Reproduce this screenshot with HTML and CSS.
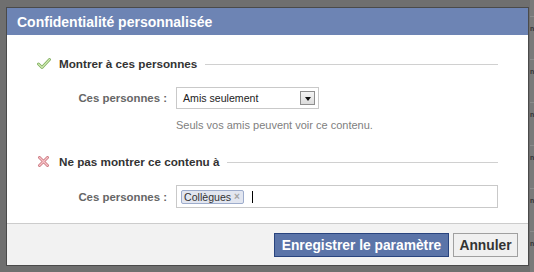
FILE: index.html
```html
<!DOCTYPE html>
<html lang="fr">
<head>
<meta charset="utf-8">
<title>Confidentialité personnalisée</title>
<link rel="stylesheet" href="styles.css">
</head>
<body>
<div class="screen">
  <div class="dialog">
    <div class="dlg-header">Confidentialité personnalisée</div>
    <div class="dlg-body">
      <div class="section-head">
        <svg class="icon" width="14" height="11" viewBox="0 0 14 11">
          <path d="M1.5 6 L5 9.5 L12.5 1.5" fill="none" stroke="#7fae5c" stroke-width="2.8" stroke-linecap="round" stroke-linejoin="round"/>
          <path d="M1.5 6 L5 9.5 L12.5 1.5" fill="none" stroke="#d3ecb6" stroke-width="1.1" stroke-linecap="round" stroke-linejoin="round"/>
        </svg>
        <span class="section-title">Montrer à ces personnes</span>
        <span class="rule"></span>
      </div>
      <div class="row row-first">
        <span class="label">Ces personnes :</span>
        <div class="select">
          <span class="select-text">Amis seulement</span>
          <span class="select-btn"><span class="tri"></span></span>
        </div>
      </div>
      <div class="help">Seuls vos amis peuvent voir ce contenu.</div>
      <div class="section-head section-second">
        <svg class="icon" width="14" height="11" viewBox="0 0 14 11">
          <path d="M2.5 1.5 L10.5 9.5 M10.5 1.5 L2.5 9.5" fill="none" stroke="#cf7f87" stroke-width="3" stroke-linecap="round"/>
          <path d="M2.5 1.5 L10.5 9.5 M10.5 1.5 L2.5 9.5" fill="none" stroke="#f6c4c8" stroke-width="1.1" stroke-linecap="round"/>
        </svg>
        <span class="section-title">Ne pas montrer ce contenu à</span>
        <span class="rule"></span>
      </div>
      <div class="row row-second">
        <span class="label">Ces personnes :</span>
        <div class="tokens">
          <span class="token">Collègues <span class="token-x">×</span></span>
          <span class="caret"></span>
        </div>
      </div>
    </div>
    <div class="dlg-footer">
      <button class="btn btn-primary" type="button">Enregistrer le paramètre</button>
      <button class="btn btn-cancel" type="button">Annuler</button>
    </div>
  </div>
  <div class="strip">
    <div class="strip-row">n</div>
    <div class="strip-row">n</div>
    <div class="strip-row">n</div>
    <div class="strip-row">n</div>
    <div class="strip-row">n</div>
    <div class="strip-row">n</div>
  </div>
</div>
</body>
</html>
```

FILE: styles.css
```css
* { box-sizing: border-box; }
html, body { margin: 0; padding: 0; }
body {
  width: 534px;
  height: 272px;
  overflow: hidden;
  background: #6f6f6f;
  font-family: "Liberation Sans", Arial, sans-serif;
}
.screen {
  display: flex;
  align-items: flex-start;
  height: 272px;
  padding-left: 6px;
  background: #6f6f6f;
}
.dialog {
  width: 523px;
  margin-top: 7px;
  border: 1px solid #4a4a4a;
  background: #fff;
  display: flex;
  flex-direction: column;
}
.dlg-header {
  height: 27px;
  background: #6d84b4;
  color: #fff;
  font-weight: bold;
  font-size: 14px;
  display: flex;
  align-items: center;
  padding-left: 10px;
}
.dlg-body {
  height: 188px;
  padding: 20px 30px 0 30px;
  background: #fff;
}
.section-head {
  height: 16px;
  display: flex;
  align-items: center;
}
.section-second { margin-top: 21px; }
.icon { flex: none; margin-right: 8px; }
.section-title {
  font-weight: bold;
  font-size: 11.7px;
  color: #333;
  white-space: nowrap;
}
.rule {
  flex: 1;
  height: 1px;
  background: #d0d0d0;
  margin-left: 8px;
  margin-top: 2px;
}
.row {
  display: flex;
  align-items: center;
}
.row-first { margin-top: 16px; height: 22px; }
.row-second { margin-top: 16px; height: 23px; }
.label {
  width: 130px;
  margin-right: 9px;
  text-align: right;
  font-weight: bold;
  font-size: 11.4px;
  color: #666;
  white-space: nowrap;
}
.select {
  width: 143px;
  height: 22px;
  border: 1px solid #c9c9c9;
  display: flex;
  align-items: center;
  justify-content: space-between;
  padding: 0 3px 0 6px;
  background: #fff;
}
.select-text { font-size: 10.6px; color: #222; }
.select-btn {
  width: 15px;
  height: 14px;
  border: 1px solid #8e8e8e;
  background: linear-gradient(#f4f4f4, #dcdcdc);
  display: flex;
  align-items: center;
  justify-content: center;
}
.tri {
  width: 0;
  height: 0;
  border-left: 3.5px solid transparent;
  border-right: 3.5px solid transparent;
  border-top: 4px solid #111;
  margin-top: 1px;
}
.help {
  margin-left: 139px;
  margin-top: 9px;
  font-size: 11px;
  line-height: 14px;
  color: #808080;
}
.tokens {
  flex: 1;
  height: 23px;
  border: 1px solid #c9c9c9;
  display: flex;
  align-items: center;
  padding-left: 4px;
  background: #fff;
}
.token {
  height: 14px;
  display: flex;
  align-items: center;
  padding: 0 3px 0 2px;
  background: #e2e6f0;
  border: 1px solid #9daccc;
  border-radius: 2px;
  font-size: 10.6px;
  color: #333;
  white-space: pre;
}
.token-x { color: #a3a3a3; font-size: 10px; font-weight: bold; }
.caret {
  width: 1px;
  height: 12px;
  background: #000;
  margin-left: 8px;
}
.dlg-footer {
  height: 42px;
  border-top: 1px solid #cccccc;
  background: #f2f2f2;
  display: flex;
  justify-content: flex-end;
  align-items: flex-start;
  padding: 9px 10px 0 0;
  gap: 4px;
}
.btn {
  height: 24px;
  font-family: "Liberation Sans", Arial, sans-serif;
  font-weight: bold;
  font-size: 13.8px;
  padding: 0 6px;
  margin: 0;
  display: flex;
  align-items: center;
}
.btn-primary {
  background: #5b74a8;
  border: 1px solid #29447e;
  color: #fff;
  width: 175px;
  justify-content: center;
}
.btn-cancel {
  background: #f0f0f0;
  border: 1px solid #a0a0a0;
  color: #333;
  width: 65px;
  justify-content: center;
}
.strip {
  flex: 1;
  height: 272px;
  margin-left: 1px;
  background: #7a7a7a;
  overflow: hidden;
  display: flex;
  flex-direction: column;
  padding-top: 16px;
}
.strip-row {
  height: 43px;
  flex: none;
  border-top: 1px solid #8c8c8c;
  color: #333;
  font-size: 7px;
  font-weight: bold;
  line-height: 12px;
  padding-top: 6px;
  padding-left: 0;
}
```
